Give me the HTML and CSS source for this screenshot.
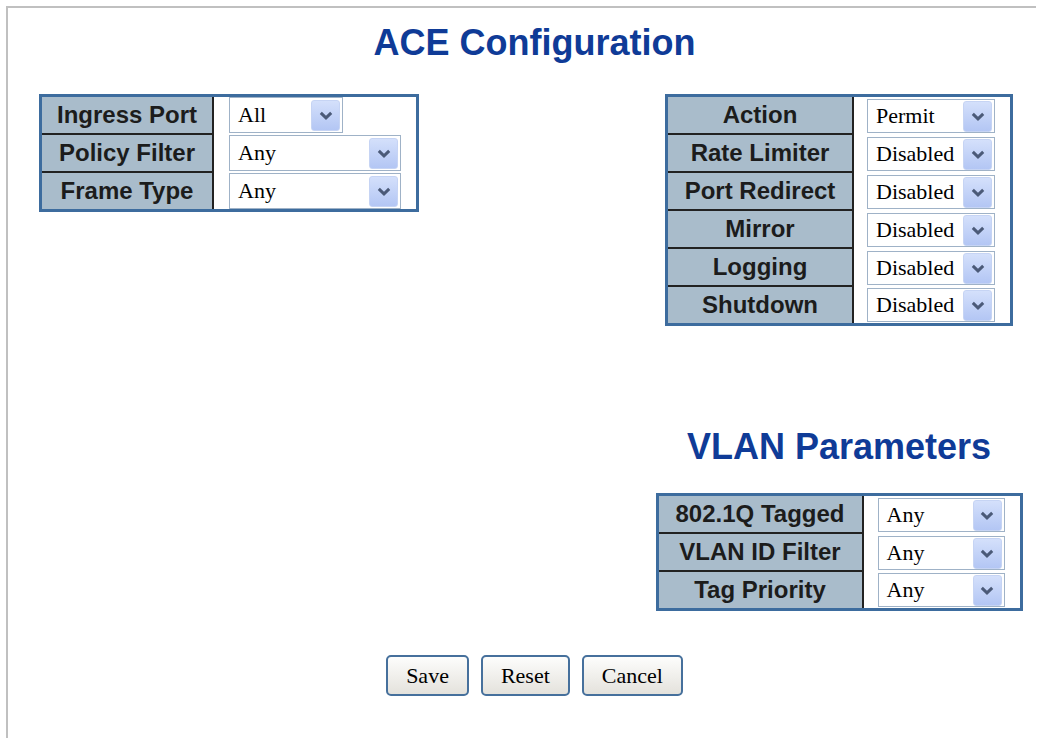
FILE: index.html
```html
<!DOCTYPE html>
<html>
<head>
<meta charset="utf-8">
<title>ACE Configuration</title>
<link rel="stylesheet" href="styles.css">
</head>
<body>
<div class="page">
  <h1 class="title">ACE Configuration</h1>
  <div class="main">
    <div class="col-left">
      <div class="cfg cfg-ingress">
        <div class="th">Ingress Port</div>
        <div class="td"><div class="sel sel-all"><span class="val">All</span><span class="btn"><svg viewBox="0 0 14 9" width="14" height="9"><path d="M1.8 1.8 L7 6.8 L12.2 1.8" fill="none" stroke="#4b5a78" stroke-width="3"/></svg></span></div></div>
        <div class="th">Policy Filter</div>
        <div class="td"><div class="sel"><span class="val">Any</span><span class="btn"><svg viewBox="0 0 14 9" width="14" height="9"><path d="M1.8 1.8 L7 6.8 L12.2 1.8" fill="none" stroke="#4b5a78" stroke-width="3"/></svg></span></div></div>
        <div class="th last">Frame Type</div>
        <div class="td"><div class="sel"><span class="val">Any</span><span class="btn"><svg viewBox="0 0 14 9" width="14" height="9"><path d="M1.8 1.8 L7 6.8 L12.2 1.8" fill="none" stroke="#4b5a78" stroke-width="3"/></svg></span></div></div>
      </div>
    </div>
    <div class="col-right">
      <div class="cfg cfg-action">
        <div class="th">Action</div>
        <div class="td"><div class="sel"><span class="val">Permit</span><span class="btn"><svg viewBox="0 0 14 9" width="14" height="9"><path d="M1.8 1.8 L7 6.8 L12.2 1.8" fill="none" stroke="#4b5a78" stroke-width="3"/></svg></span></div></div>
        <div class="th">Rate Limiter</div>
        <div class="td"><div class="sel"><span class="val">Disabled</span><span class="btn"><svg viewBox="0 0 14 9" width="14" height="9"><path d="M1.8 1.8 L7 6.8 L12.2 1.8" fill="none" stroke="#4b5a78" stroke-width="3"/></svg></span></div></div>
        <div class="th">Port Redirect</div>
        <div class="td"><div class="sel"><span class="val">Disabled</span><span class="btn"><svg viewBox="0 0 14 9" width="14" height="9"><path d="M1.8 1.8 L7 6.8 L12.2 1.8" fill="none" stroke="#4b5a78" stroke-width="3"/></svg></span></div></div>
        <div class="th">Mirror</div>
        <div class="td"><div class="sel"><span class="val">Disabled</span><span class="btn"><svg viewBox="0 0 14 9" width="14" height="9"><path d="M1.8 1.8 L7 6.8 L12.2 1.8" fill="none" stroke="#4b5a78" stroke-width="3"/></svg></span></div></div>
        <div class="th">Logging</div>
        <div class="td"><div class="sel"><span class="val">Disabled</span><span class="btn"><svg viewBox="0 0 14 9" width="14" height="9"><path d="M1.8 1.8 L7 6.8 L12.2 1.8" fill="none" stroke="#4b5a78" stroke-width="3"/></svg></span></div></div>
        <div class="th last">Shutdown</div>
        <div class="td"><div class="sel"><span class="val">Disabled</span><span class="btn"><svg viewBox="0 0 14 9" width="14" height="9"><path d="M1.8 1.8 L7 6.8 L12.2 1.8" fill="none" stroke="#4b5a78" stroke-width="3"/></svg></span></div></div>
      </div>

      <h2 class="subtitle">VLAN Parameters</h2>
      <div class="cfg cfg-vlan">
        <div class="th">802.1Q Tagged</div>
        <div class="td"><div class="sel"><span class="val">Any</span><span class="btn"><svg viewBox="0 0 14 9" width="14" height="9"><path d="M1.8 1.8 L7 6.8 L12.2 1.8" fill="none" stroke="#4b5a78" stroke-width="3"/></svg></span></div></div>
        <div class="th">VLAN ID Filter</div>
        <div class="td"><div class="sel"><span class="val">Any</span><span class="btn"><svg viewBox="0 0 14 9" width="14" height="9"><path d="M1.8 1.8 L7 6.8 L12.2 1.8" fill="none" stroke="#4b5a78" stroke-width="3"/></svg></span></div></div>
        <div class="th last">Tag Priority</div>
        <div class="td"><div class="sel"><span class="val">Any</span><span class="btn"><svg viewBox="0 0 14 9" width="14" height="9"><path d="M1.8 1.8 L7 6.8 L12.2 1.8" fill="none" stroke="#4b5a78" stroke-width="3"/></svg></span></div></div>
      </div>
    </div>
  </div>
  <div class="buttons">
    <button class="btn-action" type="button">Save</button>
    <button class="btn-action" type="button">Reset</button>
    <button class="btn-action" type="button">Cancel</button>
  </div>
</div>
</body>
</html>
```

FILE: styles.css
```css
html, body {
  overflow: hidden;
}
body {
  margin: 6px;
  background: #ffffff;
  font-family: "Liberation Sans", Arial, sans-serif;
}
.page {
  width: 1055px;
  height: 740px;
  border-top: 2px solid #c0c0c0;
  border-left: 2px solid #c0c0c0;
  padding-top: 14px;
  box-sizing: border-box;
}
.title, .subtitle {
  margin: 0;
  font-family: "Liberation Sans", Arial, sans-serif;
  font-size: 36px;
  line-height: 42px;
  font-weight: bold;
  color: #0f3b97;
  text-align: center;
}
.main {
  display: flex;
  margin-top: 30px;
}
.col-left {
  flex: 1;
  padding-left: 31px;
}
.col-right {
  width: 444px;
  display: flex;
  flex-direction: column;
  align-items: center;
}
.subtitle {
  margin-top: 100px;
  margin-bottom: 25px;
}
.cfg {
  display: grid;
  width: max-content;
  border: 3px solid #3d6c9e;
  background: #ffffff;
}
.cfg-ingress { grid-template-columns: 172px 202px; }
.cfg-action { grid-template-columns: 186px 156px; }
.cfg-vlan { grid-template-columns: 205px 156px; }
.th {
  height: 36px;
  background: #a9bccb;
  border-right: 2px solid #222222;
  border-bottom: 2px solid #222222;
  font-weight: bold;
  font-size: 24px;
  color: #1c1c1c;
  display: flex;
  align-items: center;
  justify-content: center;
  white-space: nowrap;
}
.th.last {
  border-bottom: none;
}
.td {
  display: flex;
  align-items: center;
  background: #ffffff;
}
.cfg-ingress .td {
  align-items: flex-start;
  padding: 0 15px;
}
.cfg-action .td {
  padding: 0 15px 0 13px;
}
.cfg-vlan .td {
  padding: 0 15px 0 14px;
}
.sel {
  box-sizing: border-box;
  height: 34px;
  width: 100%;
  border: 1px solid #9fb2c7;
  background: #ffffff;
  display: flex;
  align-items: center;
  justify-content: space-between;
  font-family: "Liberation Serif", "Times New Roman", serif;
  font-size: 22px;
  color: #000000;
  padding: 0 2px 0 8px;
}
.cfg-ingress .sel {
  height: 36px;
}
.sel-all {
  width: 114px;
}
.btn {
  box-sizing: border-box;
  width: 29px;
  height: 31px;
  border: 1px solid #c6d4f4;
  border-radius: 3px;
  background: linear-gradient(#d4e0fb, #b3c6f4);
  display: flex;
  align-items: center;
  justify-content: center;
}
.btn svg {
  display: block;
}
.buttons {
  display: flex;
  justify-content: center;
  gap: 12px;
  margin-top: 44px;
}
.btn-action {
  box-sizing: border-box;
  height: 41px;
  padding: 0 18px;
  border: 2px solid #46709c;
  border-radius: 5px;
  background: linear-gradient(#fdfdfc, #e4e2dc);
  font-family: "Liberation Serif", "Times New Roman", serif;
  font-size: 22px;
  color: #000000;
}
```
